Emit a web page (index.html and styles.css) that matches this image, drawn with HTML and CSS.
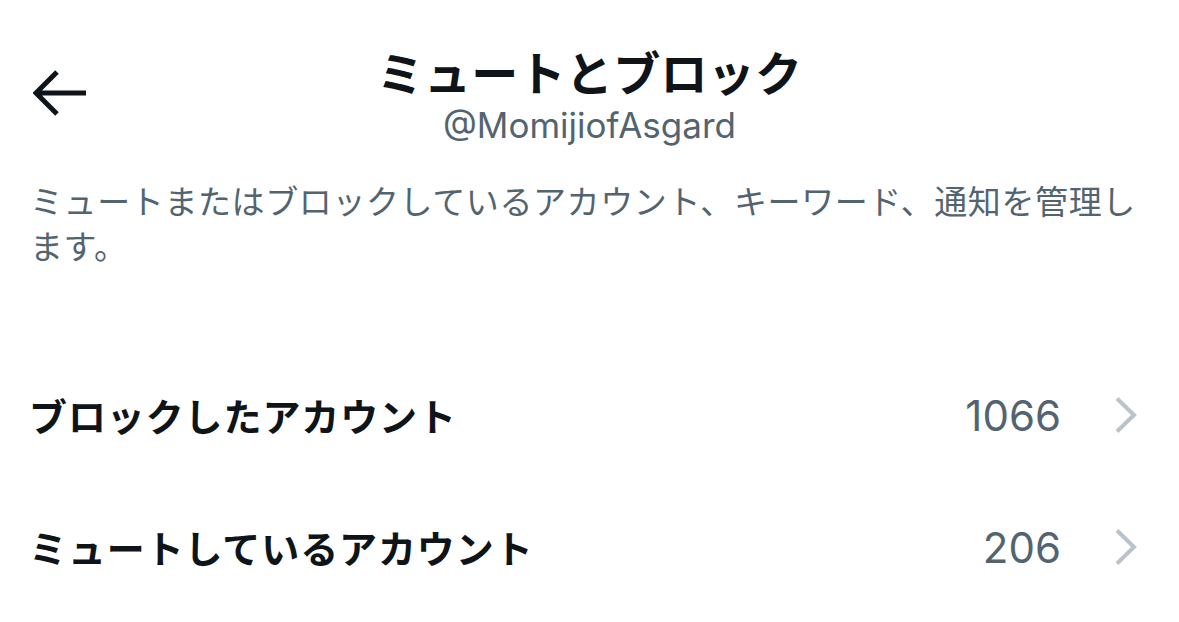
FILE: index.html
```html
<!DOCTYPE html>
<html lang="ja">
<head>
<meta charset="utf-8">
<link rel="stylesheet" href="styles.css">
</head>
<body>
<div class="page">
  <header class="header">
    <div class="back">
      <svg class="back-icon" width="56" height="46" viewBox="0 0 56 46">
        <path d="M2 23 H53 M24 2 L3 23 L24 44" fill="none" stroke="#0f1419" stroke-width="5" stroke-linejoin="miter"/>
      </svg>
    </div>
    <div class="titles">
      <h1 class="title">ミュートとブロック</h1>
      <div class="handle">@MomijiofAsgard</div>
    </div>
    <div></div>
  </header>
  <p class="desc">ミュートまたはブロックしているアカウント、キーワード、通知を管理します。</p>
  <ul class="list">
    <li class="row">
      <span class="label">ブロックしたアカウント</span>
      <span class="count">1066</span>
      <svg class="chev" width="24" height="38" viewBox="0 0 24 38">
        <path d="M3 2.5 L20 19 L3 35.5" fill="none" stroke="#b9c3cb" stroke-width="4"/>
      </svg>
    </li>
    <li class="row">
      <span class="label">ミュートしているアカウント</span>
      <span class="count">206</span>
      <svg class="chev" width="24" height="38" viewBox="0 0 24 38">
        <path d="M3 2.5 L20 19 L3 35.5" fill="none" stroke="#b9c3cb" stroke-width="4"/>
      </svg>
    </li>
  </ul>
</div>
</body>
</html>
```

FILE: styles.css
```css
* { box-sizing: border-box; }
html, body {
  margin: 0;
  padding: 0;
  background: #ffffff;
}
body {
  font-family: "Noto Sans CJK JP", "Noto Sans", sans-serif;
  color: #0f1419;
  width: 1179px;
  height: 622px;
  overflow: hidden;
}
.page {
  display: flex;
  flex-direction: column;
}
.header {
  display: grid;
  grid-template-columns: 1fr auto 1fr;
  padding-top: 43px;
}
.back {
  padding-left: 33px;
  padding-top: 27px;
}
.back-icon { display: block; }
.titles {
  display: flex;
  flex-direction: column;
  align-items: center;
}
.title {
  margin: 0;
  font-size: 47px;
  line-height: 56px;
  font-weight: 700;
  letter-spacing: 0.3px;
}
.handle {
  margin-top: 6px;
  font-family: "Inter", "Liberation Sans", sans-serif;
  font-size: 35px;
  line-height: 40px;
  color: #536471;
}
.desc {
  margin: 33px 0 0;
  padding: 0 30px;
  font-size: 33px;
  line-height: 45px;
  letter-spacing: 0.6px;
  color: #536471;
}
.list {
  list-style: none;
  margin: 81px 0 0;
  padding: 0;
}
.row {
  display: flex;
  align-items: center;
  height: 132px;
  padding: 0 41px 0 29px;
}
.label {
  flex: 1;
  font-size: 38px;
  font-weight: 700;
  letter-spacing: 0.9px;
  line-height: 50px;
}
.count {
  font-family: "Inter", "Liberation Sans", sans-serif;
  font-size: 42px;
  color: #536471;
  margin-right: 53px;
}
.chev { display: block; }
```
